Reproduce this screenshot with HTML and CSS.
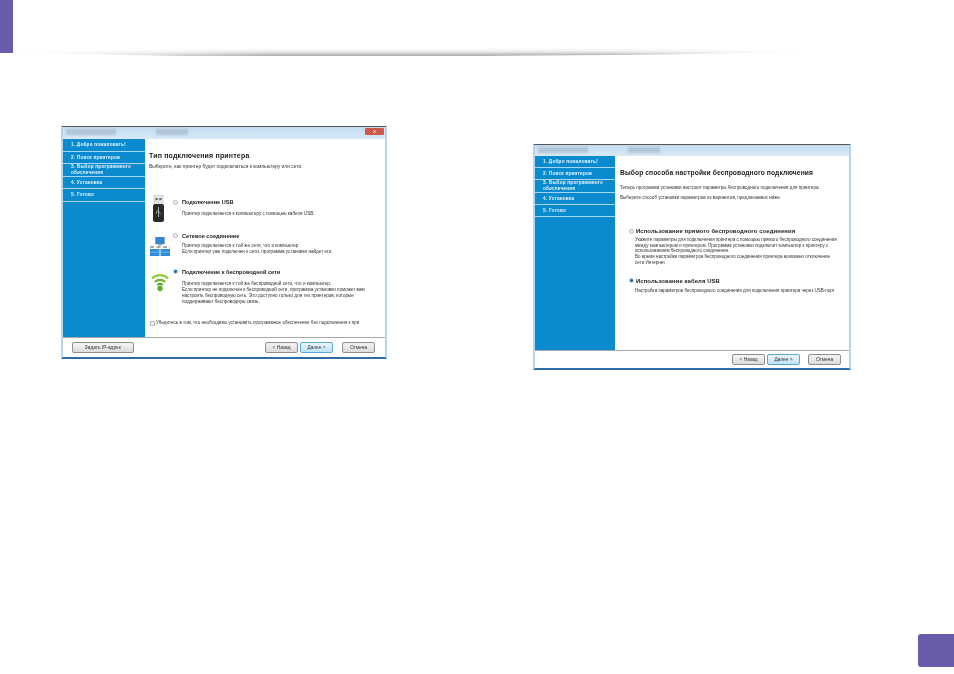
FILE: index.html
```html
<!DOCTYPE html>
<html lang="ru">
<head>
  <meta charset="UTF-8">
  <title>Установка принтера</title>
  <link rel="stylesheet" href="styles.css">
</head>
<body>

<header class="top">
  <div class="tab"></div>
  <div class="rule"></div>
</header>

<main class="shots">

  <div class="win win-a">
    <div class="titlebar">
      <div class="smudges"><i class="s1"></i><i class="s2"></i></div>
      <div class="close">x</div>
    </div>
    <div class="main">
      <ul class="side">
        <li class="r1 on">1. Добро пожаловать!</li>
        <li class="r2">2. Поиск принтеров</li>
        <li class="r3">3. Выбор программного обеспечения</li>
        <li class="r4">4. Установка</li>
        <li class="r5">5. Готово</li>
      </ul>
      <div class="pane">
        <h2 class="h">Тип подключения принтера</h2>
        <p class="sub">Выберите, как принтер будет подключаться к компьютеру или сети.</p>

        <div class="opt opt-usb">
          <div class="ico">
            <svg class="i-usb" width="13" height="27" viewBox="0 0 13 27">
              <rect x="2" y="0" width="9" height="10" fill="#e6e6e6" stroke="#b0b0b0" stroke-width=".5"/>
              <rect x="3.500" y="3" width="2.200" height="2.200" fill="#666"/>
              <rect x="7.300" y="3" width="2.200" height="2.200" fill="#666"/>
              <rect x="1" y="9" width="11" height="18" rx="2" fill="#2a2a2a"/>
              <path d="M6.500 12v10M6.500 15l-2 2v1.500M6.500 17l2 1.500" stroke="#ddd" stroke-width=".7" fill="none"/>
            </svg>
          </div>
          <div class="body">
            <div class="lab"><span class="radio"></span>Подключение USB</div>
            <p class="desc">Принтер подключается к компьютеру с помощью кабеля USB.</p>
          </div>
        </div>

        <div class="opt opt-net">
          <div class="ico">
            <svg class="i-net" width="20" height="19" viewBox="0 0 20 19">
              <rect x="5.500" y="0" width="9" height="7" fill="#2f86d6" stroke="#888" stroke-width=".5"/>
              <rect x="8" y="7" width="4" height="1.500" fill="#aaa"/>
              <path d="M0 10h20" stroke="#555" stroke-dasharray="4 2.500"/>
              <rect x="0" y="12" width="9.500" height="7" fill="#2f8bdc"/>
              <rect x="10.500" y="12" width="9.500" height="7" fill="#2f8bdc"/>
              <path d="M0 15h9.500M10.500 15h9.500" stroke="#9ccbf0" stroke-width=".6"/>
            </svg>
          </div>
          <div class="body">
            <div class="lab"><span class="radio"></span>Сетевое соединение</div>
            <p class="desc">Принтер подключается к той же сети, что и компьютер.<br>Если принтер уже подключен к сети, программа установки найдет его.</p>
          </div>
        </div>

        <div class="opt opt-wifi">
          <div class="ico">
            <svg class="i-wifi" width="18" height="19" viewBox="0 0 18 19">
              <path d="M1 5.500C5.500 1 12.500 1 17 5.500" stroke="#8fce3c" stroke-width="2.200" fill="none"/>
              <path d="M3.800 9C6.800 6.200 11.200 6.200 14.200 9" stroke="#6cbb2a" stroke-width="2.200" fill="none"/>
              <path d="M6.300 12C8 10.700 10 10.700 11.700 12" stroke="#4fa31f" stroke-width="2" fill="none"/>
              <circle cx="9" cy="15.500" r="2.700" fill="#5cae22"/>
            </svg>
          </div>
          <div class="body">
            <div class="lab"><span class="radio sel"></span>Подключение к беспроводной сети</div>
            <p class="desc">Принтер подключается к той же беспроводной сети, что и компьютер.<br>Если принтер не подключен к беспроводной сети, программа установки поможет вам<br>настроить беспроводную сеть. Это доступно только для тех принтеров, которые<br>поддерживают беспроводную связь.</p>
          </div>
        </div>

        <div class="check"><span class="box"></span>Убедитесь в том, что необходимо установить программное обеспечение без подключения к при</div>
      </div>
    </div>
    <div class="foot">
      <button class="btn btn-ip">Задать IP-адрес</button>
      <span class="grow"></span>
      <button class="btn">&lt; Назад</button>
      <button class="btn next">Далее &gt;</button>
      <button class="btn cancel">Отмена</button>
    </div>
  </div>

  <div class="win win-b">
    <div class="titlebar">
      <div class="smudges"><i class="s1"></i><i class="s2"></i></div>
    </div>
    <div class="main">
      <ul class="side">
        <li class="r1 on">1. Добро пожаловать!</li>
        <li class="r2">2. Поиск принтеров</li>
        <li class="r3">3. Выбор программного обеспечения</li>
        <li class="r4">4. Установка</li>
        <li class="r5">5. Готово</li>
      </ul>
      <div class="pane">
        <h2 class="h">Выбор способа настройки беспроводного подключения</h2>
        <p class="sub">Теперь программа установки настроит параметры беспроводного подключения для принтера.</p>
        <p class="sub sub2">Выберите способ установки параметров из вариантов, предлагаемых ниже.</p>

        <div class="choice c1">
          <div class="lab"><span class="radio"></span>Использование прямого беспроводного соединения</div>
          <p class="desc">Укажите параметры для подключения принтера с помощью прямого беспроводного соединения<br>между компьютером и принтером. Программа установки подключит компьютер к принтеру с<br>использованием беспроводного соединения.<br>Во время настройки параметров беспроводного соединения принтера возможно отключение<br>сети Интернет.</p>
        </div>
        <div class="choice c2">
          <div class="lab"><span class="radio sel"></span>Использование кабеля USB</div>
          <p class="desc">Настройка параметров беспроводного соединения для подключения принтера через USB-порт</p>
        </div>
      </div>
    </div>
    <div class="foot">
      <span class="grow"></span>
      <button class="btn">&lt; Назад</button>
      <button class="btn next">Далее &gt;</button>
      <button class="btn cancel">Отмена</button>
    </div>
  </div>

</main>

<div class="page-badge"></div>

</body>
</html>
```

FILE: styles.css
```css
* { box-sizing: border-box; }
html, body { margin: 0; padding: 0; }
body {
  width: 954px;
  height: 674px;
  overflow: hidden;
  background: #fff;
  font-family: "Liberation Sans", Arial, sans-serif;
  color: #222;
}

/* page header */
.top { height: 56px; display: flex; align-items: flex-start; }
.tab { width: 13px; height: 53px; background: #6a5cab; flex: none; }
.rule {
  width: 780px;
  height: 8px;
  margin: 48px 0 0 6px;
  background: linear-gradient(#fff, #ececec 45%, #b4b4b4 90%);
  clip-path: polygon(0 45%, 30% 0, 80% 0, 100% 40%, 100% 50%, 80% 85%, 60% 100%, 20% 100%, 0 60%);
  -webkit-mask-image: linear-gradient(90deg, transparent 0, rgba(0,0,0,.35) 14%, #000 32%, #000 76%, transparent 100%);
  mask-image: linear-gradient(90deg, transparent 0, rgba(0,0,0,.35) 14%, #000 32%, #000 76%, transparent 100%);
}

/* the two screenshots */
.shots { display: flex; align-items: flex-start; padding-left: 61px; }
.win {
  display: flex;
  flex-direction: column;
  background: #bcd8ee;
  border: 2px solid #b5d5ee;
  border-top: 1px solid #555;
  border-bottom: 2px solid #2a6ea5;
  filter: blur(.35px);
}
.win-a { width: 326px; height: 233px; margin-top: 70px; }
.win-b { width: 318px; height: 226px; margin-top: 88px; margin-left: 146px; }

.titlebar {
  height: 12px;
  flex: none;
  display: flex;
  justify-content: space-between;
  background: linear-gradient(#c3dcf1, #d9e9f6);
}
.smudges { display: flex; gap: 40px; padding: 2px 0 0 3px; filter: blur(1px); }
.smudges i { display: block; height: 6px; background: #9fb2c2; opacity: .6; }
.s1 { width: 50px; }
.s2 { width: 32px; }
.close {
  width: 19px;
  height: 7px;
  margin: 1px 1px 0 0;
  background: #cd5a4c;
  color: #fff;
  font-size: 6px;
  line-height: 7px;
  text-align: center;
  border-radius: 1px;
}
.win-b .titlebar { height: 11px; }

.main { flex: 1; display: flex; min-height: 0; }

/* blue step list */
.side {
  list-style: none;
  margin: 0;
  padding: 0;
  background: #0b8bcf;
  color: #e8f4fb;
  font-size: 4.700px;
  font-weight: bold;
  letter-spacing: .2px;
  flex: none;
}
.win-a .side { width: 82px; }
.win-b .side { width: 80px; }
.side li {
  display: flex;
  align-items: center;
  padding: 0 3px 0 8px;
  line-height: 6px;
  border-bottom: 1px solid #a5d6f0;
}
.r1 { height: 13px; }
.r2 { height: 12px; }
.r3 { height: 13px; }
.r4 { height: 12px; }
.r5 { height: 13px; }
.win-b .r1, .win-b .r2, .win-b .r4, .win-b .r5 { height: 12px; }
.win-b .r3 { height: 13px; }

.pane { flex: 1; background: #fff; min-width: 0; }
.win-a .pane { padding: 12px 4px 0 4px; }
.win-b .pane { padding: 12px 4px 0 5px; }

.h { margin: 0; font-size: 7px; line-height: 10px; font-weight: bold; letter-spacing: .18px; color: #1c1c1c; }
.win-b .h { font-size: 6.700px; letter-spacing: .1px; }
.sub { margin: 3px 0 0; font-size: 4.900px; line-height: 6px; color: #333; white-space: nowrap; }
.win-b .sub { margin-top: 7px; font-size: 4.550px; }
.win-b .sub2 { margin-top: 4px; }

.lab { font-size: 5.600px; line-height: 8px; font-weight: bold; display: flex; align-items: center; white-space: nowrap; color: #222; }
.radio {
  width: 5px;
  height: 5px;
  margin-right: 4px;
  border-radius: 50%;
  border: 1px solid #b9b9b9;
  background: #eee;
  flex: none;
}
.radio.sel { background: #2a6fb0; border-color: #b8cfe4; }
.desc { margin: 0; font-size: 4.600px; line-height: 6px; color: #333; white-space: nowrap; }

.opt { display: flex; }
.ico { width: 24px; height: 0; flex: none; }
.ico svg { display: block; }
.i-usb { margin: -3px 0 0 3px; }
.i-net { margin: 5.500px 0 0 1px; }
.i-wifi { margin: 5px 0 0 2px; }
.opt-usb { margin-top: 28px; }
.opt-usb .desc { margin: 4.500px 0 0 9px; }
.opt-net { margin-top: 15px; }
.opt-net .desc { margin: 3.500px 0 0 9px; }
.opt-wifi { margin-top: 12.500px; }
.opt-wifi .desc { margin: 5.500px 0 0 9px; }

.check { display: flex; align-items: center; margin: 15px 0 0 1px; font-size: 4.550px; line-height: 6px; white-space: nowrap; color: #333; }
.box { width: 5px; height: 5px; border: 1px solid #bbb; background: #eee; margin-right: 1px; flex: none; }

.choice { margin-left: 9px; }
.c1 { margin-top: 26px; }
.c2 { margin-top: 11px; }
.choice .lab { font-size: 5.900px; letter-spacing: .1px; }
.choice .radio { margin-right: 2px; }
.choice .desc { margin: 2px 0 0 6px; line-height: 5.700px; font-size: 4.500px; }
.c2 .desc { margin-top: 3px; }

/* buttons row */
.foot {
  flex: none;
  display: flex;
  align-items: center;
  height: 20px;
  background: #fff;
  border-top: 1px solid #a8a8a8;
  padding: 0 10px 0 9px;
}
.win-b .foot { padding-right: 8px; height: 18px; }
.grow { flex: 1; }
.btn {
  width: 33px;
  height: 11px;
  padding: 0;
  margin-left: 2px;
  font: 4.800px "Liberation Sans", Arial, sans-serif;
  color: #333;
  background: linear-gradient(#f4f4f4, #dcdcdc);
  border: 1px solid #8e8e8e;
  border-radius: 2px;
}
.btn-ip { width: 62px; margin-left: 0; }
.next { background: linear-gradient(#eaf6fc, #bfe3f6); border-color: #5aa7d6; }
.cancel { margin-left: 9px; }
.win-b .cancel { margin-left: 8px; }

/* page number box */
.page-badge {
  position: absolute;
  left: 918px;
  top: 634px;
  width: 36px;
  height: 33px;
  background: #6a5cab;
  border-radius: 3px 0 0 3px;
}
```
